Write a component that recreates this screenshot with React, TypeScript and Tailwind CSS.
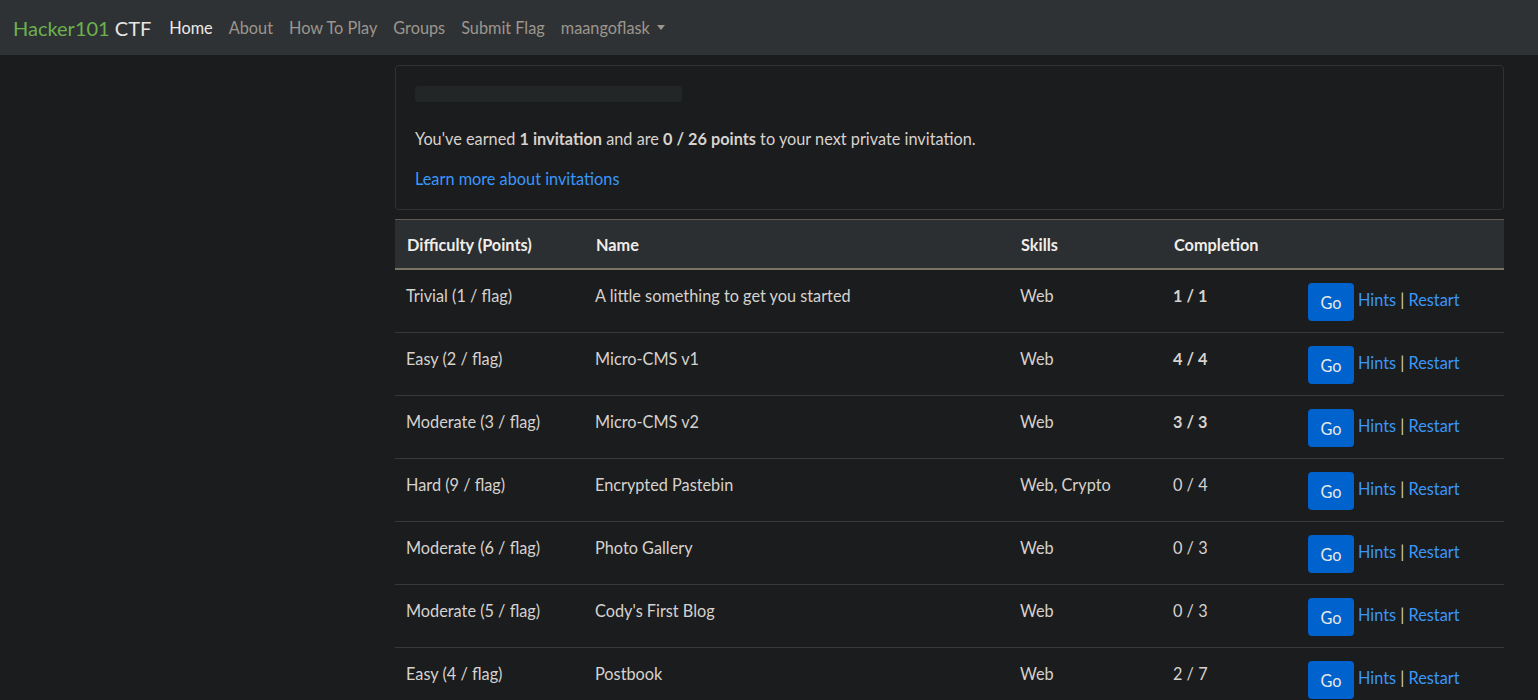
import React from 'react';

const rows = [
  { level: 'Trivial (1 / flag)', name: 'A little something to get you started', skills: 'Web', done: '1 / 1', full: true },
  { level: 'Easy (2 / flag)', name: 'Micro-CMS v1', skills: 'Web', done: '4 / 4', full: true },
  { level: 'Moderate (3 / flag)', name: 'Micro-CMS v2', skills: 'Web', done: '3 / 3', full: true },
  { level: 'Hard (9 / flag)', name: 'Encrypted Pastebin', skills: 'Web, Crypto', done: '0 / 4', full: false },
  { level: 'Moderate (6 / flag)', name: 'Photo Gallery', skills: 'Web', done: '0 / 3', full: false },
  { level: 'Moderate (5 / flag)', name: "Cody's First Blog", skills: 'Web', done: '0 / 3', full: false },
  { level: 'Easy (4 / flag)', name: 'Postbook', skills: 'Web', done: '2 / 7', full: false },
];

const navLinks = ['About', 'How To Play', 'Groups', 'Submit Flag'];

const cols = 'grid grid-cols-[189px_425px_153px_135px_1fr]';

export default function App() {
  return (
    <div className="min-h-screen bg-[#1b1c1e] text-[#d6d2cd] text-[16.3px] leading-6 font-['Lato',sans-serif]">
      {/* Top navbar */}
      <nav className="h-[55px] bg-[#2f3235] flex items-center px-[13px]">
        <a className="text-[20px] mr-[10px] whitespace-nowrap">
          <span className="text-[#6cb14e]">Hacker101</span>
          <span className="text-[#e8e6e3]"> CTF</span>
        </a>
        <a className="px-2 text-[#eeebe7]">Home</a>
        {navLinks.map((l) => (
          <a key={l} className="px-2 text-[#9c968e]">{l}</a>
        ))}
        <a className="px-2 text-[#9c968e] flex items-center gap-[7px]">
          maangoflask
          <span className="w-0 h-0 border-x-[4px] border-x-transparent border-t-[5px] border-t-[#9c968e]" />
        </a>
      </nav>

      <main className="ml-[395px] w-[1109px] pt-[10px]">
        {/* Invitation card */}
        <div className="border border-[#2f3234] rounded-[4px] px-[19px] pt-[20px] pb-[18px]">
          <div className="w-[267px] h-[16px] rounded-[3px] bg-[#222627]" />
          <p className="mt-[25px] mb-4">
            You've earned <b className="font-bold">1 invitation</b> and are <b className="font-bold">0 / 26 points</b> to your next private invitation.
          </p>
          <a className="text-[#3a97f9]">Learn more about invitations</a>
        </div>

        {/* Challenges table */}
        <div className="mt-[9px]">
          <div className={`${cols} bg-[#2c2f32] border-t border-[#5e5951] border-b-2 border-b-[#7b7263] text-[#f0ede9] font-bold`}>
            <div className="px-3 pt-[13px] pb-[11px]">Difficulty (Points)</div>
            <div className="px-3 pt-[13px] pb-[11px]">Name</div>
            <div className="px-3 pt-[13px] pb-[11px]">Skills</div>
            <div className="px-3 pt-[13px] pb-[11px]">Completion</div>
            <div className="p-3" />
          </div>
          {rows.map((r, i) => (
            <div key={i} className={`${cols} border-b border-[#37393b]`}>
              <div className="px-[11px] pt-[14px] pb-3">{r.level}</div>
              <div className="px-[11px] pt-[14px] pb-3">{r.name}</div>
              <div className="px-[11px] pt-[14px] pb-3">{r.skills}</div>
              <div className={`px-[11px] pt-[14px] pb-3 ${r.full ? 'font-bold' : ''}`}>{r.done}</div>
              <div className="px-[11px] pt-[13px] pb-[11px] flex items-start">
                <button className="w-[46px] h-[38px] rounded-[4px] bg-[#0062cd] text-[#eae8e4] pt-[2px]">Go</button>
                <span className="ml-[4px] mt-[5px] whitespace-nowrap">
                  <a className="text-[#3a97f9]">Hints</a>
                  <span className="text-[#d6d2cd]"> | </span>
                  <a className="text-[#3a97f9]">Restart</a>
                </span>
              </div>
            </div>
          ))}
        </div>
      </main>
    </div>
  );
}
